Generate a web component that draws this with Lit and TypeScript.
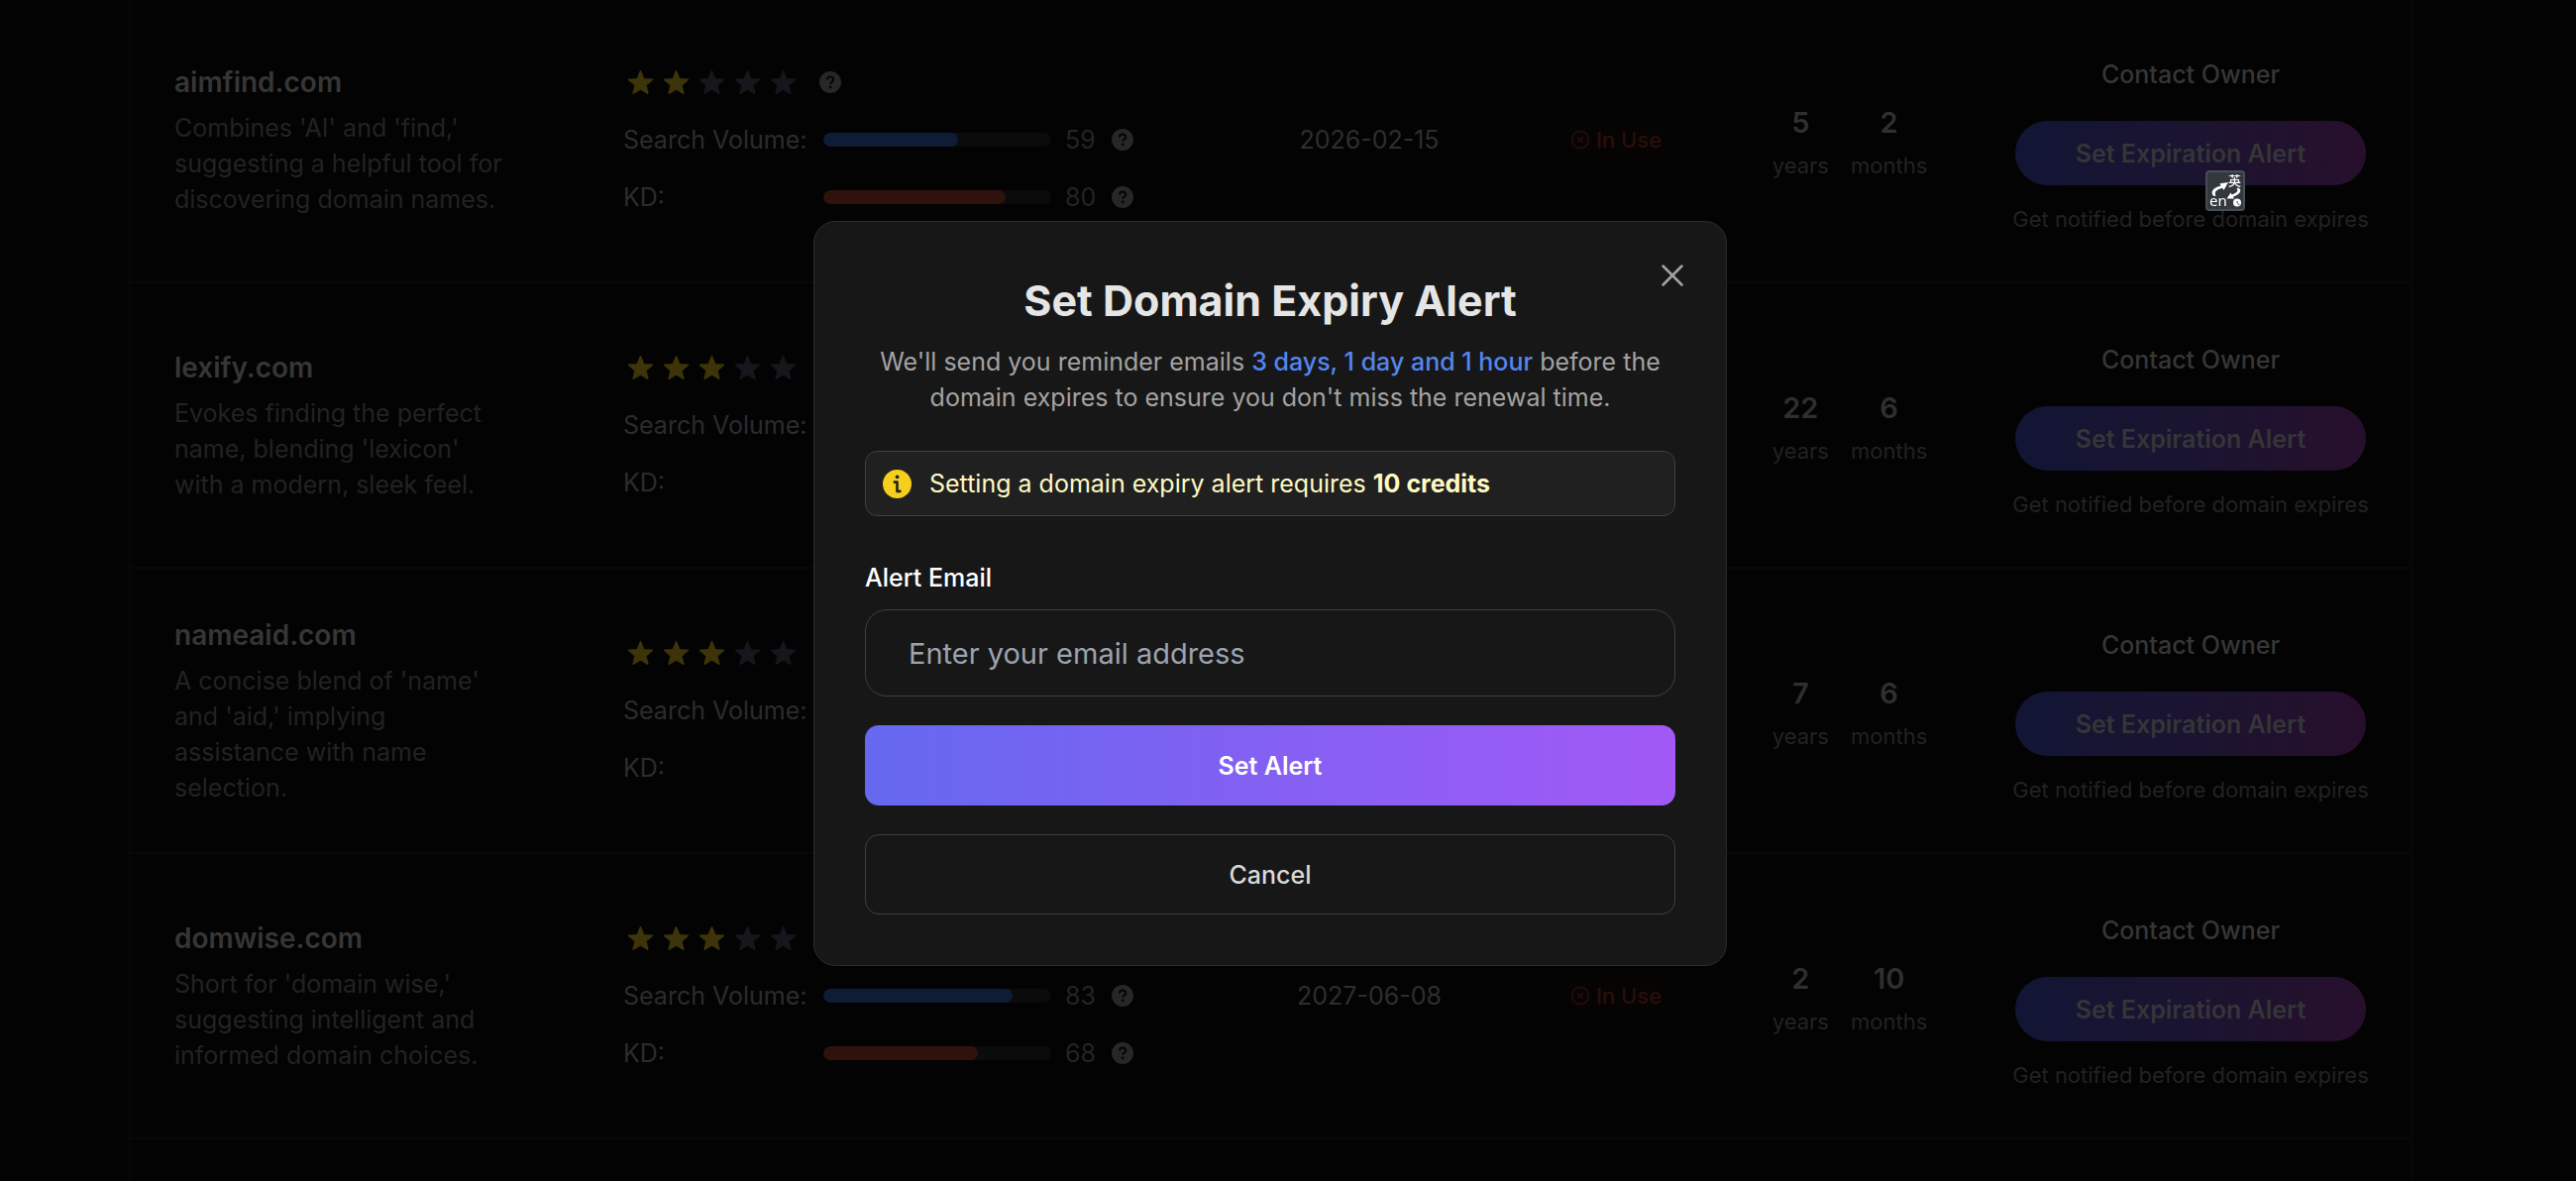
import { LitElement, html, css, svg } from "lit";
import { customElement, state } from "lit/decorators.js";

interface Domain {
  name: string;
  about: string;
  stars: number;
  volume: number;
  difficulty: number;
  expires: string;
  years: number;
  months: number;
}

const DOMAINS: Domain[] = [
  { name: "aimfind.com", about: "Combines 'AI' and 'find,' suggesting a helpful tool for discovering domain names.", stars: 2, volume: 59, difficulty: 80, expires: "2026-02-15", years: 5, months: 2 },
  { name: "lexify.com", about: "Evokes finding the perfect name, blending 'lexicon' with a modern, sleek feel.", stars: 3, volume: 70, difficulty: 60, expires: "2026-10-08", years: 22, months: 6 },
  { name: "nameaid.com", about: "A concise blend of 'name' and 'aid,' implying assistance with name selection.", stars: 3, volume: 70, difficulty: 60, expires: "2026-10-08", years: 7, months: 6 },
  { name: "domwise.com", about: "Short for 'domain wise,' suggesting intelligent and informed domain choices.", stars: 3, volume: 83, difficulty: 68, expires: "2027-06-08", years: 2, months: 10 },
];

const starIcon = (on: boolean) => html`<svg class=${on ? "star on" : "star"} viewBox="0 0 29 29" aria-hidden="true">
  <path d="M14.500 2.700L17.800 10.670L26.400 11.340L19.830 16.930L21.850 25.300L14.500 20.800L7.150 25.300L9.170 16.930L2.600 11.340L11.200 10.670Z" stroke-width="1.500" stroke-linejoin="round"/></svg>`;

const helpIcon = html`<svg class="help" viewBox="0 0 22 22" aria-hidden="true">
  <circle cx="11" cy="11" r="11" fill="#272727"/>
  <path d="M7.9 8.5c0-1.900 1.300-3.100 3.150-3.100s3.150 1.150 3.150 2.850c0 2.350-2.900 2.300-2.900 4.500" fill="none" stroke="#040404" stroke-width="2"/>
  <circle cx="11.200" cy="15.800" r="1.400" fill="#040404"/></svg>`;

@customElement("domain-table")
export class DomainTable extends LitElement {
  static styles = css`
    :host { display: block; }
    table { width: 100%; margin-top: -2px; border-collapse: separate; border-spacing: 0; table-layout: fixed; border-left: 2px solid #080808; border-right: 2px solid #080808; box-sizing: border-box; }
    .c-metrics { width: 656px; }
    .c-date { width: 286px; }
    .c-status { width: 212px; }
    .c-age { width: 260px; }
    .c-action { width: 436px; }
    td { box-sizing: border-box; height: 288px; padding: 0; border-bottom: 2px solid #080808; vertical-align: middle; text-align: center; }
    .tail td { height: 60px; }
    .about { padding: 2px 0 0 44px; text-align: left; }
    .name { margin: 0 0 10px; font-size: 28px; line-height: 36px; font-weight: 600; color: #363636; }
    .text { margin: 0; max-width: 338px; line-height: 36px; color: #222; }
    .metrics { padding-left: 46px; }
    .stack { display: flex; flex-direction: column; gap: 22px; }
    .line { display: flex; align-items: center; height: 36px; }
    .rating { display: flex; gap: 7px; padding-left: 3px; margin-right: 22px; }
    .star { width: 29px; height: 29px; fill: #16171c; stroke: #16171c; }
    .star.on { fill: #3d340a; stroke: #3d340a; }
    .help { width: 22px; height: 22px; flex: none; }
    .label { width: 202px; flex: none; text-align: left; color: #2c2c2c; }
    .bar { width: 230px; height: 14px; border-radius: 7px; background: #0b0b0b; overflow: hidden; flex: none; }
    .fill { height: 100%; border-radius: 7px; background: #0f1c36; }
    .fill.kd { background: #30120d; }
    .value { width: 33px; margin: 0 14px; text-align: left; color: #242424; }
    .date { color: #2e2e2e; }
    .badge { display: inline-flex; align-items: center; gap: 6px; padding: 7px 12px; border-radius: 14px; background: #050402; color: #2b0e0b; font-size: 22px; line-height: 30px; font-weight: 500; }
    .badge svg { width: 20px; height: 20px; }
    .age { display: flex; justify-content: center; gap: 22px; }
    .unit { display: flex; flex-direction: column; font-size: 22px; line-height: 32px; color: #222; }
    .count { font-size: 29px; line-height: 50px; margin-bottom: 2px; font-weight: 600; color: #2f2f2f; }
    .actions { display: flex; flex-direction: column; align-items: center; padding: 12px 44px 0 36px; }
    .contact { color: #363636; text-decoration: none; font-weight: 500; line-height: 36px; margin-bottom: 29px; }
    .alert { width: 100%; max-width: 354px; height: 65px; border: 0; border-radius: 33px; background: linear-gradient(90deg, #121535, #1a1430 50%, #270f2c); color: #353538; font: inherit; font-weight: 600; }
    .note { margin-top: 18px; font-size: 22px; line-height: 32px; color: #222; white-space: nowrap; }
  `;

  private metric(label: string, value: number, kd: boolean) {
    return html`<div class="line">
      <span class="label">${label}</span>
      <div class="bar"><div class=${kd ? "fill kd" : "fill"} style="width:${value}%"></div></div>
      <span class="value">${value}</span>${helpIcon}
    </div>`;
  }

  private row(d: Domain) {
    return html`<tr>
      <td class="about"><h3 class="name">${d.name}</h3><p class="text">${d.about}</p></td>
      <td class="metrics"><div class="stack">
        <div class="line"><div class="rating">${[1, 2, 3, 4, 5].map((n) => starIcon(n <= d.stars))}</div>${helpIcon}</div>
        ${this.metric("Search Volume:", d.volume, false)} ${this.metric("KD:", d.difficulty, true)}
      </div></td>
      <td class="date">${d.expires}</td>
      <td><span class="badge"><svg viewBox="0 0 20 20" fill="none" stroke="currentColor" stroke-width="1.500" aria-hidden="true"><circle cx="10" cy="10" r="8.500"/><path d="M7 7l6 6M13 7l-6 6"/></svg>In Use</span></td>
      <td><div class="age">
        <div class="unit"><span class="count">${d.years}</span>years</div>
        <div class="unit"><span class="count">${d.months}</span>months</div>
      </div></td>
      <td><div class="actions">
        <a class="contact" href="#contact">Contact Owner</a>
        <button class="alert" type="button">Set Expiration Alert</button>
        <span class="note">Get notified before domain expires</span>
      </div></td>
    </tr>`;
  }

  render() {
    return html`<table aria-label="Domains">
      <colgroup><col /><col class="c-metrics" /><col class="c-date" /><col class="c-status" /><col class="c-age" /><col class="c-action" /></colgroup>
      <tbody>${DOMAINS.map((d) => this.row(d))}<tr class="tail"><td colspan="6"></td></tr></tbody>
    </table>`;
  }
}

@customElement("expiry-dialog")
export class ExpiryDialog extends LitElement {
  @state() private email = "";

  static styles = css`
    :host { display: block; width: 922px; max-width: 100%; }
    .panel { position: relative; box-sizing: border-box; padding: 51px; border: 1px solid #2c2c2c; border-radius: 22px; background: #171717; }
    .close { position: absolute; top: 36px; right: 36px; width: 36px; height: 36px; padding: 0; border: 0; background: none; color: #a3a3a3; }
    .close svg { display: block; width: 36px; height: 36px; }
    .title { margin: 0 0 16px; font-size: 43px; line-height: 56px; font-weight: 700; text-align: center; color: #e5e5e5; }
    .lead { margin: 0 0 36px; line-height: 36px; text-align: center; color: #a3a3a3; }
    .when { color: #5585ee; font-weight: 500; }
    .notice { display: flex; align-items: center; gap: 18px; padding: 14px 17px; border: 1px solid #404040; border-radius: 12px; background: #202020; color: #fef9c3; line-height: 36px; }
    .notice svg { width: 29px; height: 29px; flex: none; }
    .form { display: flex; flex-direction: column; }
    .label { margin: 44px 0 14px; line-height: 36px; font-weight: 500; color: #fff; }
    .input { box-sizing: border-box; width: 100%; height: 88px; padding: 0 43px; border: 1px solid #404040; border-radius: 22px; background: #171717; color: #e5e5e5; font: inherit; font-size: 29px; }
    .input::placeholder { color: #9ca3af; opacity: 1; }
    .btn { height: 81px; margin-top: 29px; border-radius: 14px; font: inherit; font-weight: 500; }
    .primary { border: 0; background: linear-gradient(90deg, #6568f0, #a259f6); color: #fff; font-weight: 600; }
    .ghost { border: 1px solid #404040; background: #171717; color: #d9d9d9; }
  `;

  render() {
    return html`<div class="panel" role="dialog" aria-labelledby="title">
      <button class="close" type="button" aria-label="Close"><svg viewBox="0 0 36 36" fill="none" stroke="currentColor" stroke-width="2.500" stroke-linecap="round"><path d="M8.500 8.500l19 19M27.500 8.500l-19 19"/></svg></button>
      <h2 class="title" id="title">Set Domain Expiry Alert</h2>
      <p class="lead">We'll send you reminder emails <span class="when">3 days, 1 day and 1 hour</span> before the domain expires to ensure you don't miss the renewal time.</p>
      <div class="notice">
        <svg viewBox="0 0 29 29" aria-hidden="true"><circle cx="14.500" cy="14.500" r="14.500" fill="#f5cf1c"/><circle cx="14.600" cy="7.300" r="1.900" fill="#202020"/><path d="M11.800 12.600h2.700v9.300h2.900" fill="none" stroke="#202020" stroke-width="2.600" stroke-linecap="round" stroke-linejoin="round"/></svg>
        <span>Setting a domain expiry alert requires <strong>10 credits</strong></span>
      </div>
      <form class="form" @submit=${(e: Event) => e.preventDefault()}>
        <label class="label" for="email">Alert Email</label>
        <input class="input" id="email" type="email" placeholder="Enter your email address" .value=${this.email} @input=${(e: Event) => (this.email = (e.target as HTMLInputElement).value)} />
        <button class="btn primary" type="submit">Set Alert</button>
        <button class="btn ghost" type="button">Cancel</button>
      </form>
    </div>`;
  }
}

@customElement("app-root")
export class AppRoot extends LitElement {
  static styles = css`
    :host { display: block; height: 100vh; overflow: hidden; background: #030303; font-family: Inter, "Liberation Sans", sans-serif; font-size: 25px; line-height: 36px; }
    .page { padding: 0 165px 0 130px; }
    .backdrop { position: fixed; inset: 0; display: flex; align-items: center; justify-content: center; padding: 6px 36px 0 0; }
    .translate { position: absolute; left: 2226px; top: 172px; width: 40px; height: 41px; }
    .glyph { font-family: "Noto Sans CJK SC", sans-serif; font-size: 13px; font-weight: 500; }
    .latin { font-family: "Noto Sans", sans-serif; font-size: 15px; }
  `;

  render() {
    return html`<main class="page"><domain-table></domain-table></main>
      <div class="backdrop"><expiry-dialog></expiry-dialog></div>
      <svg class="translate" viewBox="0 0 40 41" fill="#fff" role="img" aria-label="Translate">
        <rect x="1" y="1" width="38" height="39" rx="3" fill="#32383e" stroke="#484e54" stroke-width="2"/>
        ${svg`<path d="M8.500 26C5 23.500 6 17.500 15.500 15.500L14.500 13.200L23 12L18.500 20L17.200 17.800C11 19.500 8.500 21.500 10.500 25.500Z"/>
        <path d="M33 17.500C37 19 36 24 28 26.500L29 28.500L21.500 28.500L25.500 22.500L26.600 24.600C32 22.500 33.500 20.500 31.500 18.500Z"/>
        <circle cx="32" cy="32.500" r="4"/><path d="M32 31c0 2 .800 3.200 2.500 3.800" stroke="#32383e" fill="none"/>
        <text class="glyph" x="23" y="15">英</text><text class="latin" x="4" y="36">en</text>`}
      </svg>`;
  }
}
